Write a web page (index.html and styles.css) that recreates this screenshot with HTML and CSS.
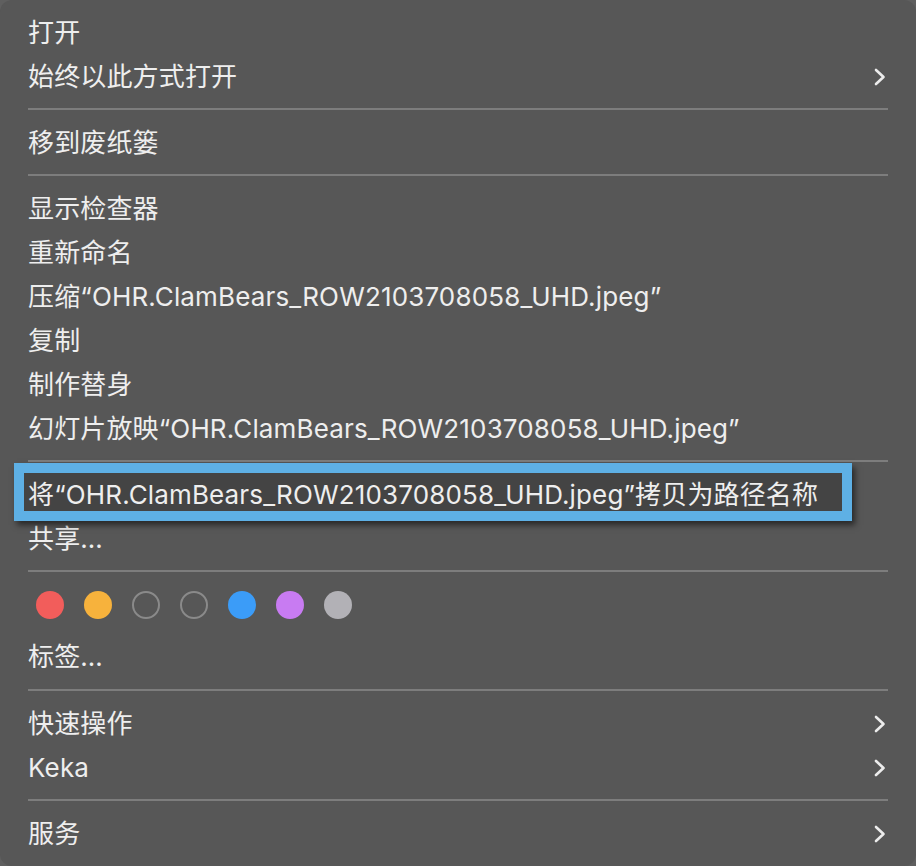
FILE: index.html
```html
<!DOCTYPE html>
<html lang="zh-CN">
<head>
<meta charset="utf-8">
<title>Context menu</title>
<link rel="stylesheet" href="styles.css">
</head>
<body>
<div class="menu">
  <div class="item">打开</div>
  <div class="item">始终以此方式打开<svg class="chev" viewBox="0 0 14 20"><path d="M3 3 L10.5 10 L3 17"/></svg></div>
  <div class="sep"></div>
  <div class="item">移到废纸篓</div>
  <div class="sep"></div>
  <div class="item">显示检查器</div>
  <div class="item">重新命名</div>
  <div class="item">压缩“OHR.ClamBears_ROW2103708058_UHD.jpeg”</div>
  <div class="item">复制</div>
  <div class="item">制作替身</div>
  <div class="item">幻灯片放映“OHR.ClamBears_ROW2103708058_UHD.jpeg”</div>
  <div class="sep"></div>
  <div class="item hl">将“OHR.ClamBears_ROW2103708058_UHD.jpeg”拷贝为路径名称</div>
  <div class="item">共享…</div>
  <div class="sep"></div>
  <div class="tags">
    <span class="dot red"></span>
    <span class="dot orange"></span>
    <span class="dot empty"></span>
    <span class="dot empty"></span>
    <span class="dot blue"></span>
    <span class="dot purple"></span>
    <span class="dot gray"></span>
  </div>
  <div class="item">标签…</div>
  <div class="sep sep-after-tags"></div>
  <div class="item">快速操作<svg class="chev" viewBox="0 0 14 20"><path d="M3 3 L10.5 10 L3 17"/></svg></div>
  <div class="item">Keka<svg class="chev" viewBox="0 0 14 20"><path d="M3 3 L10.5 10 L3 17"/></svg></div>
  <div class="sep"></div>
  <div class="item">服务<svg class="chev" viewBox="0 0 14 20"><path d="M3 3 L10.5 10 L3 17"/></svg></div>
</div>
</body>
</html>
```
FILE: styles.css
```css
html, body {
  margin: 0;
  padding: 0;
  background: #5f5f5f;
}
.menu {
  width: 916px;
  height: 866px;
  box-sizing: border-box;
  background: #575757;
  border-radius: 12px;
  padding: 11px 28px 0 28px;
  font-family: Inter, "Noto Sans CJK SC", sans-serif;
  font-size: 26px;
  letter-spacing: 0.15px;
  color: #eeeeee;
}
.item {
  height: 44px;
  line-height: 44px;
  display: flex;
  align-items: center;
  justify-content: space-between;
  white-space: nowrap;
}
.chev {
  width: 14px;
  height: 20px;
  margin-right: 1px;
  fill: none;
  stroke: #ececec;
  stroke-width: 2.6;
  stroke-linecap: round;
  stroke-linejoin: round;
}
.sep {
  height: 2px;
  margin: 9px 0 11px 0;
  background: #7d7d7d;
}
.sep-after-tags {
  margin-top: 10px;
}
.hl {
  position: relative;
  z-index: 0;
}
.hl::before {
  content: "";
  position: absolute;
  left: -14px;
  right: 36px;
  top: -10px;
  bottom: -4px;
  box-sizing: border-box;
  border: 10px solid #5eb0e5;
  background: #444444;
  box-shadow: 3px 4px 6px rgba(0, 0, 0, 0.55);
  z-index: -1;
}
.tags {
  height: 52px;
  box-sizing: border-box;
  padding-top: 8px;
  padding-left: 8px;
  display: flex;
  gap: 20px;
}
.dot {
  width: 28px;
  height: 28px;
  border-radius: 50%;
  box-sizing: border-box;
}
.red { background: #f25d5b; }
.orange { background: #f7b23c; }
.blue { background: #3b9cf8; }
.purple { background: #c87bf2; }
.gray { background: #b2b1b6; }
.empty { border: 2px solid #8a8a8a; }
```
